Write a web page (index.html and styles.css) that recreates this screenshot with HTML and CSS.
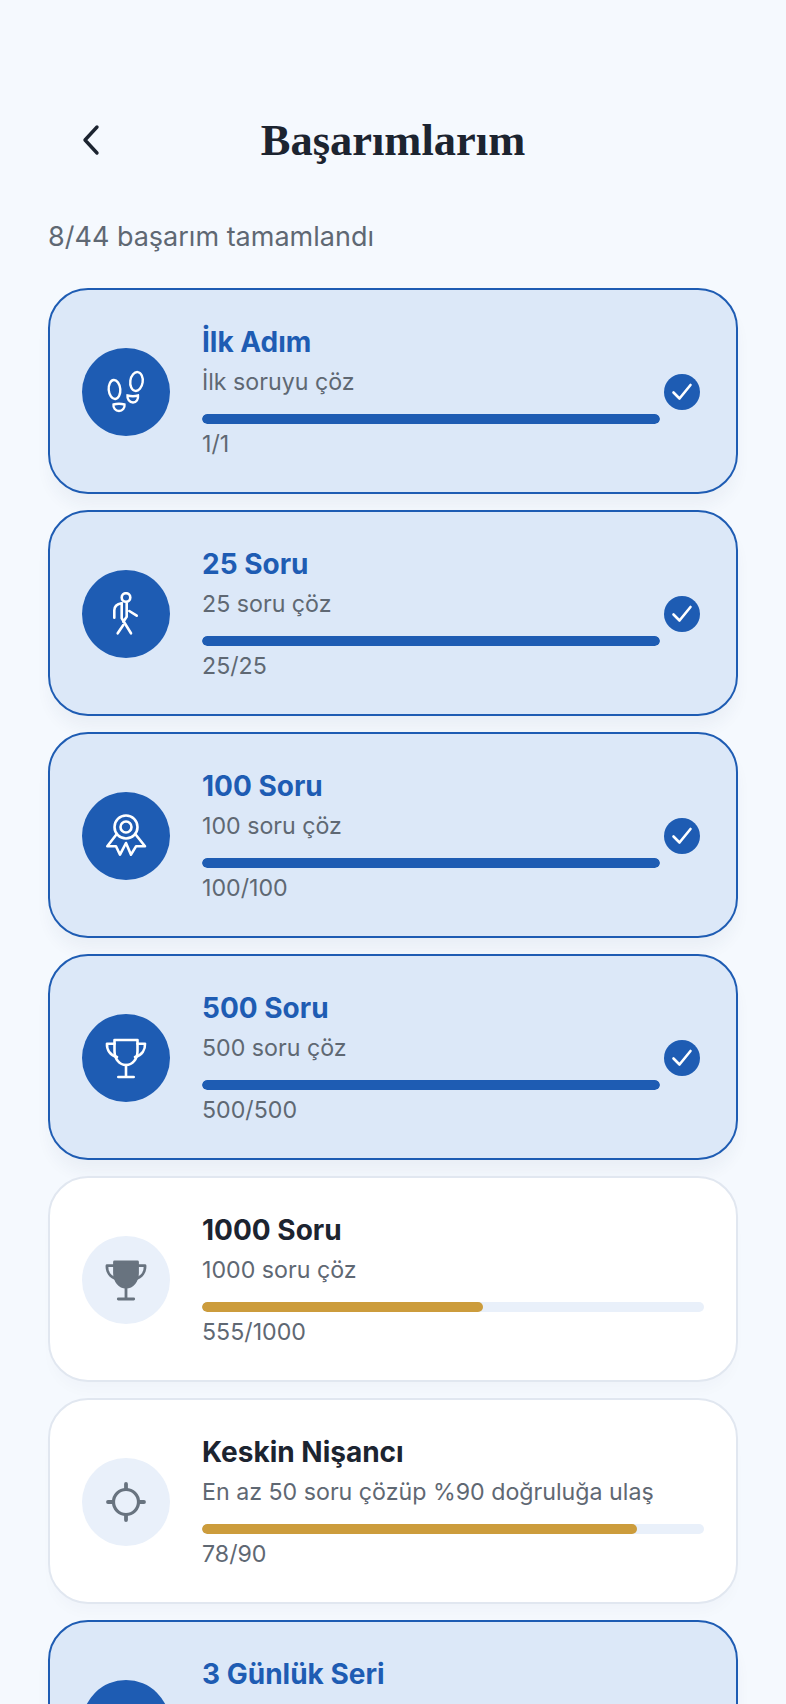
FILE: index.html
```html
<!DOCTYPE html>
<html lang="tr">
<head>
<meta charset="utf-8">
<title>Başarımlarım</title>
<link rel="stylesheet" href="styles.css">
</head>
<body>
<svg class="defs" width="0" height="0" aria-hidden="true">
  <symbol id="check" viewBox="0 0 36 36"><path d="M9.500 18.500l6 6L26.500 11" fill="none" stroke="#fff" stroke-width="2.600" stroke-linecap="round" stroke-linejoin="round"/></symbol>
</svg>
<main class="page">
  <header class="topbar">
    <button class="back" aria-label="Geri">
      <svg width="24" height="34" viewBox="0 0 24 34"><path d="M17 4L5 17l12 13" fill="none" stroke="#1c2430" stroke-width="3.400" stroke-linecap="round" stroke-linejoin="round"/></svg>
    </button>
    <h1 class="title">Başarımlarım</h1>
  </header>
  <p class="summary">8/44 başarım tamamlandı</p>
  <section class="list">

    <article class="card done">
      <div class="badge">
        <svg class="icon" viewBox="0 0 44 44" fill="none" stroke="#fff" stroke-width="2.400">
          <ellipse cx="10.500" cy="19.500" rx="5.800" ry="9.500" transform="rotate(-5 10.500 19.500)"/>
          <path d="M9.500 34.500q5.500-1.500 11 0c.5 3.500-2 6.500-5.500 6.500s-6-3-5.500-6.500z"/>
          <ellipse cx="32.500" cy="11.500" rx="6.200" ry="9.500" transform="rotate(8 32.500 11.500)"/>
          <path d="M23.500 25.500q5.500 1.500 10.500 0c.5 3.500-1.500 7-5 7s-6-3.500-5.500-7z"/>
        </svg>
      </div>
      <div class="body">
        <h2 class="name">İlk Adım</h2>
        <p class="desc">İlk soruyu çöz</p>
        <div class="track"><div class="fill" style="width:100%"></div></div>
        <p class="count">1/1</p>
      </div>
      <svg class="tick" viewBox="0 0 36 36"><use href="#check"/></svg>
    </article>

    <article class="card done">
      <div class="badge">
        <svg class="icon" viewBox="0 0 44 44" fill="none" stroke="#fff" stroke-width="2.600" stroke-linecap="round" stroke-linejoin="round">
          <circle cx="22" cy="5.500" r="4.300"/>
          <path d="M17.700 11.300c-4 .7-7.400 3-7.400 7v7.400"/>
          <path d="M17.700 11.300v15l9.300 15"/>
          <path d="M22.700 11.300v13.400l-3.400 5"/>
          <path d="M25.300 19l7.400 4.700"/>
          <path d="M19.300 33l-5.600 8.300"/>
        </svg>
      </div>
      <div class="body">
        <h2 class="name">25 Soru</h2>
        <p class="desc">25 soru çöz</p>
        <div class="track"><div class="fill" style="width:100%"></div></div>
        <p class="count">25/25</p>
      </div>
      <svg class="tick" viewBox="0 0 36 36"><use href="#check"/></svg>
    </article>

    <article class="card done">
      <div class="badge">
        <svg class="icon" viewBox="0 0 44 44" fill="none" stroke="#fff" stroke-width="2.600" stroke-linejoin="round" stroke-linecap="round">
          <circle cx="22" cy="13" r="11.500"/>
          <circle cx="22" cy="13" r="5.500"/>
          <path d="M12 21L3.300 32.300H12l4 8.400L22 29l5 11.700 5-8.400h9L32 21"/>
        </svg>
      </div>
      <div class="body">
        <h2 class="name">100 Soru</h2>
        <p class="desc">100 soru çöz</p>
        <div class="track"><div class="fill" style="width:100%"></div></div>
        <p class="count">100/100</p>
      </div>
      <svg class="tick" viewBox="0 0 36 36"><use href="#check"/></svg>
    </article>

    <article class="card done">
      <div class="badge">
        <svg class="icon" viewBox="0 0 44 44" fill="none" stroke="#fff" stroke-width="2.600" stroke-linecap="round" stroke-linejoin="round">
          <path d="M10.500 4h23v11c0 8-5 14-11.500 14s-11.500-6-11.500-14z"/>
          <path d="M10.500 7.700H3c-.4 6 3 11.500 10 13.300"/>
          <path d="M33.500 7.700H41c.4 6-3 11.500-10 13.300"/>
          <path d="M22 29v12M14.300 41h15.400"/>
        </svg>
      </div>
      <div class="body">
        <h2 class="name">500 Soru</h2>
        <p class="desc">500 soru çöz</p>
        <div class="track"><div class="fill" style="width:100%"></div></div>
        <p class="count">500/500</p>
      </div>
      <svg class="tick" viewBox="0 0 36 36"><use href="#check"/></svg>
    </article>

    <article class="card">
      <div class="badge">
        <svg class="icon" viewBox="0 0 44 44" fill="none" stroke="#68737f" stroke-width="2.800" stroke-linecap="round" stroke-linejoin="round">
          <path fill="#68737f" d="M10.500 4h23v11c0 8-5 14-11.500 14s-11.500-6-11.500-14z"/>
          <path d="M10.500 7.700H3c-.4 6 3 11.500 10 13.300"/>
          <path d="M33.500 7.700H41c.4 6-3 11.500-10 13.300"/>
          <path d="M22 29v12M14.300 41h15.400"/>
        </svg>
      </div>
      <div class="body">
        <h2 class="name">1000 Soru</h2>
        <p class="desc">1000 soru çöz</p>
        <div class="track"><div class="fill" style="width:56%"></div></div>
        <p class="count">555/1000</p>
      </div>
    </article>

    <article class="card">
      <div class="badge">
        <svg class="icon" viewBox="0 0 44 44" fill="none" stroke="#68737f" stroke-width="3.200" stroke-linecap="round">
          <circle cx="22" cy="22" r="12.500"/>
          <path stroke-width="3.800" d="M22 4v5M22 35v5M4 22h5M35 22h5"/>
        </svg>
      </div>
      <div class="body">
        <h2 class="name">Keskin Nişancı</h2>
        <p class="desc">En az 50 soru çözüp %90 doğruluğa ulaş</p>
        <div class="track"><div class="fill" style="width:86.700%"></div></div>
        <p class="count">78/90</p>
      </div>
    </article>

    <article class="card done">
      <div class="badge"></div>
      <div class="body">
        <h2 class="name">3 Günlük Seri</h2>
        <p class="desc">3 gün üst üste soru çöz</p>
        <div class="track"><div class="fill" style="width:100%"></div></div>
        <p class="count">3/3</p>
      </div>
      <svg class="tick" viewBox="0 0 36 36"><use href="#check"/></svg>
    </article>

  </section>
</main>
</body>
</html>
```

FILE: styles.css
```css
* { box-sizing: border-box; }
html, body { margin: 0; padding: 0; }
body {
  height: 1704px;
  overflow: hidden;
  background: #f5f9fe;
  font-family: "Inter", "Liberation Sans", sans-serif;
  color: #1c2430;
}
.defs { display: block; height: 0; }
.page { padding: 98px 48px 0; }
.topbar {
  display: grid;
  grid-template-columns: 88px 1fr 88px;
  align-items: center;
  height: 84px;
}
.back {
  display: flex;
  align-items: center;
  justify-content: center;
  width: 88px;
  height: 84px;
  padding: 0;
  border: 0;
  background: none;
}
.title {
  margin: 0;
  text-align: center;
  font-family: "Liberation Serif", serif;
  font-size: 44.500px;
  font-weight: 700;
  line-height: 84px;
  color: #1c2430;
}
.summary {
  margin: 37px 0 0;
  font-size: 27px;
  line-height: 36px;
  color: #5f6873;
}
.list {
  display: flex;
  flex-direction: column;
  gap: 16px;
  margin-top: 33px;
}
.card {
  display: flex;
  align-items: center;
  flex: none;
  height: 206px;
  padding: 2px 32px 0;
  background: #fff;
  border: 2px solid #e1e7f0;
  border-radius: 40px;
  box-shadow: 0 12px 14px -4px rgba(30, 50, 90, 0.025);
}
.card.done {
  background: #dce8f8;
  border-color: #1e5cb3;
  box-shadow: 0 14px 16px -2px rgba(30, 50, 90, 0.05);
}
.badge {
  display: flex;
  align-items: center;
  justify-content: center;
  flex: none;
  width: 88px;
  height: 88px;
  border-radius: 50%;
  background: #e9f0fa;
}
.done .badge { background: #1e5cb3; }
.icon { width: 44px; height: 44px; }
.body { flex: 1; min-width: 0; margin-left: 32px; }
.name {
  margin: 0;
  font-size: 28px;
  font-weight: 700;
  line-height: 36px;
  color: #1c2430;
}
.done .name { color: #1e5cb3; }
.desc {
  margin: 4px 0 0;
  font-size: 23.200px;
  line-height: 36px;
  color: #5f6873;
}
.track {
  height: 10px;
  margin-top: 14px;
  border-radius: 5px;
  background: #e9f0fa;
  overflow: hidden;
}
.fill { height: 100%; border-radius: 5px; background: #cc9c3c; }
.done .fill { background: #1e5cb3; }
.count {
  margin: 4px 0 0;
  font-size: 23.200px;
  line-height: 32px;
  color: #5f6873;
}
.tick {
  flex: none;
  width: 36px;
  height: 36px;
  margin-left: 4px;
  margin-right: 4px;
  border-radius: 50%;
  background: #1e5cb3;
}
```
